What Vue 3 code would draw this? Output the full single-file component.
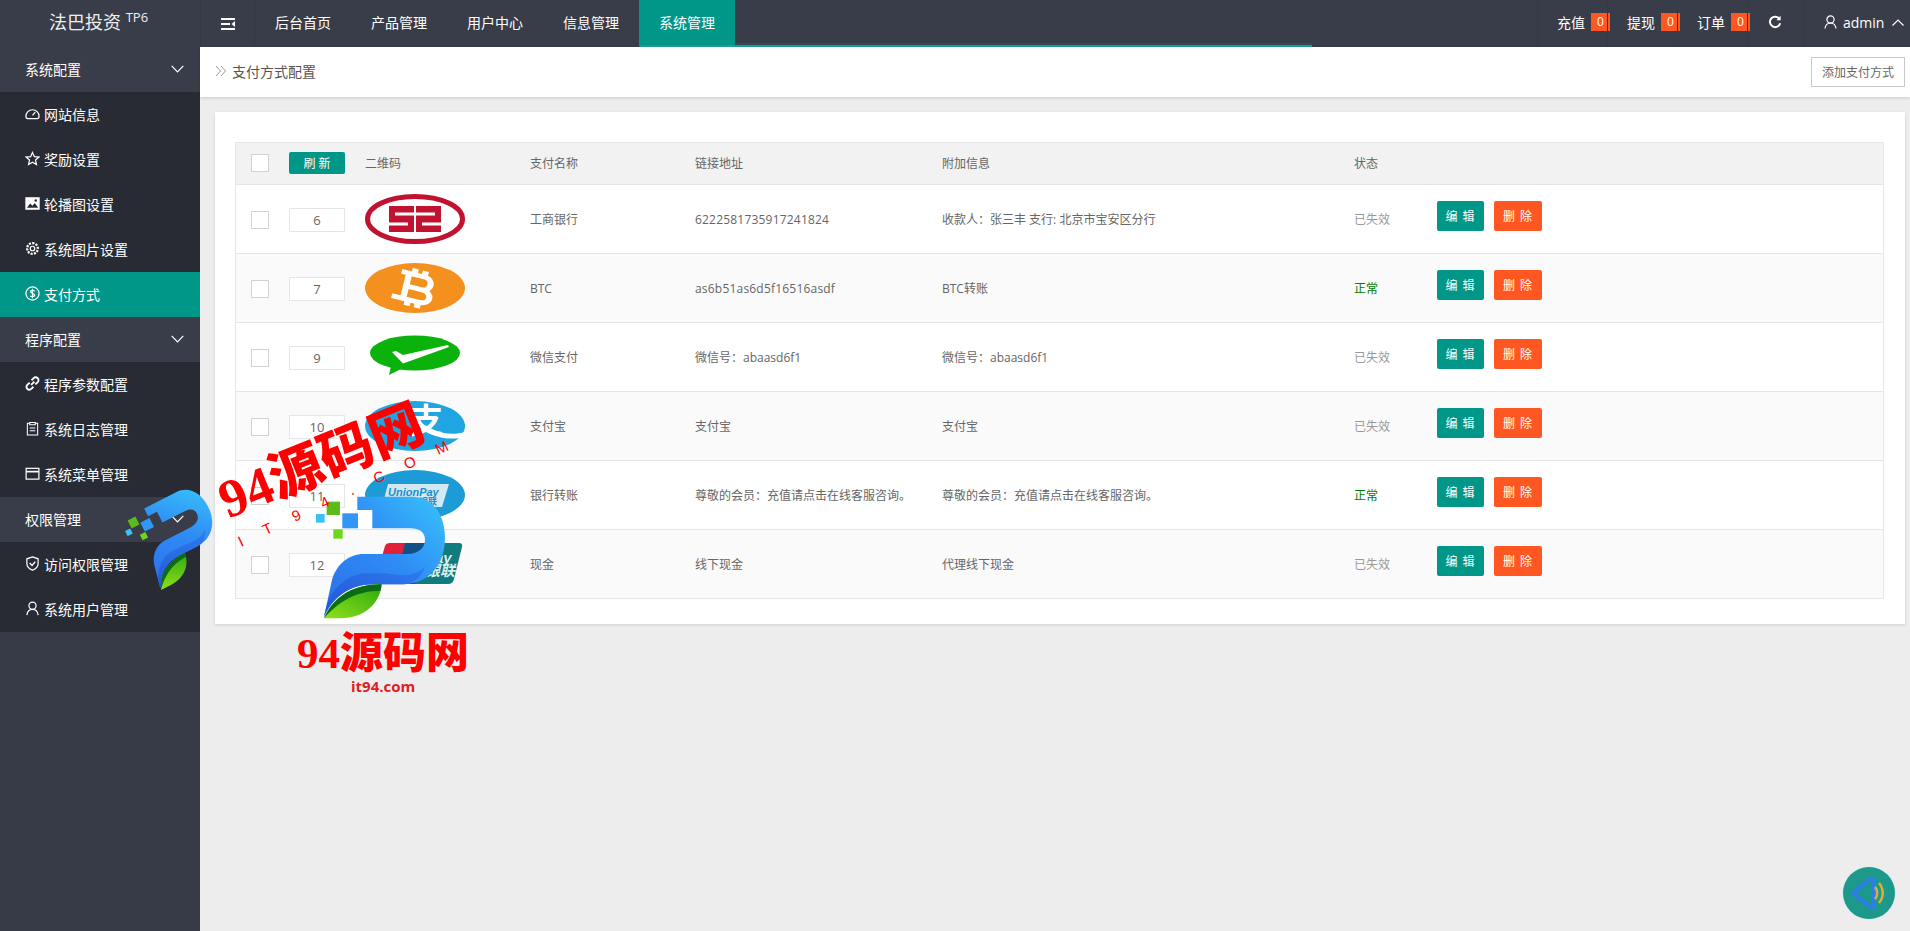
<template>
  <div class="page">
    <header class="top">
      <div class="logo">法巴投资 <sup>TP6</sup></div>
      <div class="toggle">
        <svg width="14" height="12" viewBox="0 0 14 12" fill="#fff">
          <rect x="0" y="0" width="14" height="2" />
          <rect x="0" y="5" width="9" height="2" />
          <rect x="0" y="10" width="14" height="2" />
          <path d="M14 3 L10.5 6 L14 9 Z" />
        </svg>
      </div>
      <nav class="nav">
        <a v-for="n in navs" :key="n" class="nav-item" :class="{ on: n === '系统管理' }">{{ n }}</a>
        <span class="nav-bar"></span>
      </nav>
      <div class="top-right">
        <div v-for="c in counters" :key="c" class="counter">{{ c }}<b>0</b></div>
        <div class="refresh">
          <svg width="14" height="14" viewBox="0 0 14 14" fill="none" stroke="#fff" stroke-width="2">
            <path d="M11.6 4.2 A5.2 5.2 0 1 0 12.2 8.2" />
            <path d="M12.6 0.8 V5.2 H8.4 Z" fill="#fff" stroke="none" />
          </svg>
        </div>
        <div class="user">
          <svg width="13" height="14" viewBox="0 0 13 14" fill="none" stroke="#fff" stroke-width="1.2">
            <circle cx="6.5" cy="4.5" r="3.6" />
            <path d="M1 13.5 C1.5 9.8 3.5 8 6.5 8 C9.5 8 11.5 9.8 12 13.5" />
          </svg>
          <span>admin</span>
          <svg width="12" height="7" viewBox="0 0 12 7" fill="none" stroke="#fff" stroke-width="1.2">
            <path d="M0.5 6.5 L6 1 L11.5 6.5" />
          </svg>
        </div>
      </div>
    </header>

    <div class="body">
      <aside class="side">
        <template v-for="g in menu" :key="g.title">
          <div class="group">
            <span>{{ g.title }}</span>
            <svg width="13" height="8" viewBox="0 0 13 8" fill="none" stroke="#fff" stroke-width="1.2">
              <path d="M0.7 0.8 L6.5 6.8 L12.3 0.8" />
            </svg>
          </div>
          <a v-for="it in g.items" :key="it.name" class="item" :class="{ on: it.name === '支付方式' }">
            <svg class="ico" width="15" height="15" viewBox="0 0 16 16" fill="none" stroke="currentColor" stroke-width="1.3" v-html="icons[it.icon]"></svg>
            {{ it.name }}
          </a>
        </template>
      </aside>

      <main class="main">
        <div class="crumb">
          <div class="crumb-title">
            <svg width="12" height="12" viewBox="0 0 12 12" fill="none" stroke="#999" stroke-width="1">
              <path d="M1 1 L5.5 6 L1 11 M6 1 L10.5 6 L6 11" />
            </svg>
            支付方式配置
          </div>
          <button class="add">添加支付方式</button>
        </div>

        <section class="card">
          <div class="table">
            <div class="row head">
              <div><span class="check"></span></div>
              <div><button class="refresh-btn">刷 新</button></div>
              <div>二维码</div>
              <div>支付名称</div>
              <div>链接地址</div>
              <div>附加信息</div>
              <div>状态</div>
              <div></div>
            </div>
            <div v-for="r in rows" :key="r.id" class="row">
              <div><span class="check"></span></div>
              <div><input class="sort" :value="r.id" /></div>
              <div class="pic">
                <svg width="100" height="50" viewBox="0 0 100 50">
                  <template v-if="r.logo === 'icbc'">
                    <ellipse cx="50" cy="25" rx="47.5" ry="22.5" fill="#fff" stroke="#c1132f" stroke-width="5" />
                    <path fill="#c1132f" d="M24 12 H49 V18.500 H30 V21.500 H49 V38 H24 V31.500 H43 V28.500 H24 Z M51 12 H76 V28.500 H57 V31.500 H76 V38 H51 V21.500 H70 V18.500 H51 Z" />
                  </template>
                  <template v-else-if="r.logo === 'btc'">
                    <ellipse cx="50" cy="25" rx="50" ry="25" fill="#f4901d" />
                    <g transform="rotate(14 50 25) translate(50 25) scale(1.3 1) translate(-50 -25)" fill="none" stroke="#fff" stroke-width="4.800">
                      <path d="M37 12 H55 C63 12 63 25 55 25 H43 M55 25 C65 25 65 38 55 38 H34" />
                      <path d="M43 12 V38 M47 6 V12 M55 6 V12 M47 38 V44 M55 38 V44" />
                    </g>
                  </template>
                  <template v-else-if="r.logo === 'wx'">
                    <ellipse cx="50" cy="21" rx="45" ry="17.500" fill="#0bb20c" />
                    <path d="M26 34 L24 43 L38 36 Z" fill="#0bb20c" />
                    <path fill="#fff" d="M27 20 L31 19 L38 23 L83 13 L84 15 L38 31.500 Z" />
                  </template>
                  <template v-else-if="r.logo === 'ali'">
                    <ellipse cx="50" cy="25" rx="50" ry="25" fill="#1fa6e2" />
                    <text x="44" y="32" class="ali-t">支</text>
                    <path d="M60 24 C72 32 86 35 100 31 L99 36 C84 40 68 36 56 28 Z" fill="#fff" />
                  </template>
                  <template v-else-if="r.logo === 'union'">
                    <ellipse cx="50" cy="25" rx="50" ry="25" fill="#1d9bd7" />
                    <path d="M23 14 H84 L77 37 H17 Z" fill="#d3e8f2" />
                    <text x="23" y="26" class="up-t">UnionPay</text>
                    <text x="54" y="35" class="up-c">银联</text>
                  </template>
                  <template v-else>
                    <path d="M20 7 Q21 4 25 4 H44 L33 45 H14 Q9 45 10 41 Z" fill="#e2203a" />
                    <path d="M40 4 H66 L55 45 H30 Z" fill="#114f86" />
                    <path d="M60 4 H94 Q98 4 97 8 L89 40 Q88 45 83 45 H50 Z" fill="#127b7d" />
                    <text x="60" y="24" class="card-t">Pay</text>
                    <text x="60" y="37" class="card-c">银联</text>
                  </template>
                </svg>
              </div>
              <div>{{ r.name }}</div>
              <div :class="{ latin: /^\w+$/.test(r.link) }">{{ r.link }}</div>
              <div>{{ r.extra }}</div>
              <div :class="r.ok ? 'ok' : 'off'">{{ r.ok ? '正常' : '已失效' }}</div>
              <div class="ops">
                <button class="btn teal">编 辑</button>
                <button class="btn red">删 除</button>
              </div>
            </div>
          </div>
        </section>
      </main>
    </div>

    <svg class="mark" width="520" height="720" viewBox="0 0 520 720">
      <defs>
        <linearGradient id="pBlue" x1="0" y1="1" x2="1" y2="0">
          <stop offset="0" stop-color="#2a6fe8" />
          <stop offset="0.55" stop-color="#2f8df5" />
          <stop offset="1" stop-color="#38c4fb" />
        </linearGradient>
        <linearGradient id="pDark" x1="0" y1="1" x2="1" y2="0">
          <stop offset="0" stop-color="#2454d6" />
          <stop offset="1" stop-color="#2d7cf0" />
        </linearGradient>
        <linearGradient id="pLeaf" x1="0" y1="1" x2="1" y2="0">
          <stop offset="0" stop-color="#8fe01c" />
          <stop offset="1" stop-color="#2ea80f" />
        </linearGradient>
        <g id="pLogo">
          <rect x="620" y="305" width="40" height="40" fill="#5cbb1c" />
          <rect x="588" y="342" width="26" height="26" fill="#3cc0f8" />
          <rect x="667" y="340" width="47" height="45" fill="#3196f5" />
          <rect x="640" y="388" width="28" height="28" fill="#6fd61c" />
          <path fill="url(#pBlue)" d="M712 290 H875 C940 290 975 345 975 415 C975 495 925 553 850 553 H760 C690 553 640 590 612 650 L636 540 C650 490 690 462 730 462 H860 C900 462 915 440 915 420 C915 398 900 385 870 385 H757 V330 H712 Z" />
          <path fill="url(#pDark)" d="M612 650 C640 590 690 553 760 553 H850 C880 553 905 530 915 500 C890 525 860 530 800 520 H740 C690 520 640 560 622 610 Z" />
          <path fill="url(#pLeaf)" d="M612 655 C640 590 700 553 785 553 C780 610 735 655 660 655 Z" />
          <path fill="#0a6c14" d="M612 655 C640 590 700 553 785 553 L782 572 C710 572 655 605 612 655 Z" />
        </g>
      </defs>

      <use href="#pLogo" transform="translate(120 400) scale(0.3333)" />
      <use href="#pLogo" transform="translate(161 590) rotate(-27) scale(0.22) translate(-612 -655)" />

      <text class="wm-big" transform="translate(228 519) rotate(-22)">94源码网</text>
      <text class="wm-sub" transform="translate(241 547) rotate(-25)">IT94.COM</text>
      <text class="wm-low" x="297" y="668">94源码网</text>
      <text class="wm-url" x="351" y="692">it94.com</text>
    </svg>

    <div class="float">
      <svg width="52" height="52" viewBox="0 0 52 52" fill="none">
        <path d="M10 26 L27 12 L30 12 V40 L27 40 Z" stroke="#2c7fe8" stroke-width="4" stroke-linejoin="round" />
        <path d="M32 20 C35 23 35 29 32 32" stroke="#e8ab2f" stroke-width="2.500" />
        <path d="M36 16 C41 22 41 30 36 36" stroke="#e8ab2f" stroke-width="2.500" />
      </svg>
    </div>
  </div>
</template>

<script setup>
const navs = ['后台首页', '产品管理', '用户中心', '信息管理', '系统管理']
const counters = ['充值', '提现', '订单']

const menu = [
  {
    title: '系统配置',
    items: [
      { name: '网站信息', icon: 'gauge' },
      { name: '奖励设置', icon: 'star' },
      { name: '轮播图设置', icon: 'image' },
      { name: '系统图片设置', icon: 'gear' },
      { name: '支付方式', icon: 'dollar' }
    ]
  },
  {
    title: '程序配置',
    items: [
      { name: '程序参数配置', icon: 'link' },
      { name: '系统日志管理', icon: 'clip' },
      { name: '系统菜单管理', icon: 'win' }
    ]
  },
  {
    title: '权限管理',
    items: [
      { name: '访问权限管理', icon: 'shield' },
      { name: '系统用户管理', icon: 'user' }
    ]
  }
]

const icons = {
  gauge: '<path d="M3 13.500 H13 C14.300 13.500 15 12.500 15 11 A7 7 0 0 0 1 11 C1 12.500 1.700 13.500 3 13.500 Z"/><path d="M8 10 L11 6.500"/>',
  star: '<path d="M8 1.500 L10 6 L14.800 6.500 L11.200 9.700 L12.200 14.500 L8 12 L3.800 14.500 L4.800 9.700 L1.200 6.500 L6 6 Z"/>',
  image: '<rect x="1" y="2" width="14" height="12" fill="#fff" stroke="#fff"/><path d="M2 12.500 L5.500 8 L8 10.500 L10.500 7.500 L14 12.500 Z" fill="#282b33" stroke="none"/><circle cx="11.500" cy="4.800" r="1.300" fill="#282b33" stroke="none"/>',
  gear: '<circle cx="8" cy="8" r="2.400"/><path stroke-dasharray="2.200 1.300" stroke-width="2.400" d="M8 2.300 A5.700 5.700 0 1 1 7.990 2.300"/>',
  dollar: '<circle cx="8" cy="8" r="7"/><path d="M10.300 5.500 C9.800 4.400 6 4 6 6.200 C6 8.400 10.300 7.600 10.300 9.900 C10.300 12 6.300 11.600 5.700 10.500 M8 3 V13"/>',
  link: '<path stroke-width="2" d="M6.500 9.500 L10 6 M7 4.500 L9 2.500 C10.500 1 12.200 1 13.500 2.300 C14.800 3.600 14.800 5.300 13.300 6.800 L11 9 M9 11.500 L7 13.500 C5.500 15 3.800 15 2.500 13.700 C1.200 12.400 1.200 10.700 2.700 9.200 L5 7"/>',
  clip: '<path d="M5 2.500 H2.500 V15 H13.500 V2.500 H11 M5 1.500 H11 V4 H5 Z M5 7.500 H11 M5 10.500 H11" stroke-width="1.100"/>',
  win: '<rect x="1.200" y="2.500" width="13.600" height="11.500" /><path d="M1.200 6 H14.800" stroke-width="1.800"/>',
  shield: '<path d="M8 1 L14 3 V8 C14 11.500 11 14 8 15 C5 14 2 11.500 2 8 V3 Z"/><path d="M5 7.500 L7.500 10 L11 6" stroke-width="1.500"/>',
  user: '<circle cx="8" cy="5" r="3.800"/><path d="M2 15 C2.500 11 4.700 9 8 9 C11.300 9 13.500 11 14 15"/>'
}

const rows = [
  { id: 6, logo: 'icbc', name: '工商银行', link: '6222581735917241824', extra: '收款人：张三丰 支行: 北京市宝安区分行', ok: false },
  { id: 7, logo: 'btc', name: 'BTC', link: 'as6b51as6d5f16516asdf', extra: 'BTC转账', ok: true },
  { id: 9, logo: 'wx', name: '微信支付', link: '微信号：abaasd6f1', extra: '微信号：abaasd6f1', ok: false },
  { id: 10, logo: 'ali', name: '支付宝', link: '支付宝', extra: '支付宝', ok: false },
  { id: 11, logo: 'union', name: '银行转账', link: '尊敬的会员：充值请点击在线客服咨询。', extra: '尊敬的会员：充值请点击在线客服咨询。', ok: true },
  { id: 12, logo: 'card', name: '现金', link: '线下现金', extra: '代理线下现金', ok: false }
]
</script>

<style>
body {
  background: #eee;
}
</style>

<style scoped>
.page {
  position: relative;
  height: 100vh;
  overflow: hidden;
  background: #ededed;
  font-family: "Open Sans", "Noto Sans CJK SC", sans-serif;
  font-size: 14px;
  color: #666;
}

.top {
  display: flex;
  height: 47px;
  background: #393d49;
  color: #fff;
}

.logo {
  width: 200px;
  line-height: 44px;
  padding-left: 49px;
  box-sizing: border-box;
  font-size: 18px;
  white-space: nowrap;
  color: #eee;
}

.logo sup {
  font-size: 13px;
  line-height: 0;
  vertical-align: 7px;
}

.toggle {
  width: 55px;
  display: flex;
  align-items: center;
  justify-content: center;
  box-sizing: border-box;
  border-left: 1px solid #343844;
  border-right: 1px solid #343844;
}

.nav {
  position: relative;
  flex: 1;
  display: flex;
}

.nav-item {
  width: 96px;
  text-align: center;
  line-height: 45px;
  color: #fff;
}

.nav-item.on {
  background: #009688;
}

.nav-bar {
  position: absolute;
  left: 385px;
  bottom: 0;
  width: 672px;
  height: 4px;
  background: linear-gradient(to bottom, rgba(0, 150, 136, 0.12) 0, rgba(0, 150, 136, 0.2) 50%, #1f9c8f 50%);
}

.top-right {
  display: flex;
  height: 47px;
}

.counter {
  width: 70px;
  height: 47px;
  padding: 0 0 3px 19px;
  box-sizing: border-box;
  display: flex;
  align-items: center;
  white-space: nowrap;
  border-left: 1px solid #363a46;
}

.counter b {
  display: block;
  width: 19px;
  height: 18px;
  margin-left: 6px;
  background: #ff5722;
  font-size: 12px;
  font-weight: 400;
  line-height: 18px;
  text-align: center;
  flex: none;
}

.refresh {
  width: 56px;
  height: 47px;
  padding: 0 0 3px 20px;
  box-sizing: border-box;
  display: flex;
  align-items: center;
  border-left: 1px solid #363a46;
}

.user {
  width: 107px;
  height: 47px;
  padding: 0 0 3px 20px;
  box-sizing: border-box;
  display: flex;
  align-items: center;
  gap: 6px;
  border-left: 1px solid #363a46;
}

.user span {
  margin-right: 2px;
}

.body {
  display: flex;
  height: calc(100vh - 47px);
}

.side {
  width: 200px;
  flex: none;
  background: #373b47;
  color: #fff;
}

.group {
  height: 45px;
  padding: 0 16px 2px 25px;
  box-sizing: border-box;
  display: flex;
  align-items: center;
  justify-content: space-between;
  background: #393d49;
}

.item {
  height: 45px;
  padding: 0 0 2px 25px;
  box-sizing: border-box;
  display: flex;
  align-items: center;
  gap: 4px;
  background: #282b33;
}

.item.on {
  background: #009688;
}

.ico {
  flex: none;
}

.main {
  flex: 1;
  min-width: 0;
}

.crumb {
  height: 50px;
  padding: 0 5px 0 15px;
  display: flex;
  align-items: center;
  justify-content: space-between;
  background: #fff;
  box-shadow: 0 1px 3px rgba(0, 0, 0, 0.15);
}

.crumb-title {
  display: flex;
  align-items: center;
  gap: 5px;
  padding-bottom: 2px;
  color: #555;
}

.add {
  width: 94px;
  height: 30px;
  padding: 0;
  border: 1px solid #c9c9c9;
  background: #fff;
  color: #666;
  font: inherit;
  font-size: 12px;
}

.card {
  margin: 15px 5px 0 15px;
  padding: 30px 21px 25px 20px;
  background: #fff;
  box-shadow: 0 1px 3px rgba(0, 0, 0, 0.12);
}

.table {
  border: 1px solid #e6e6e6;
  border-bottom-width: 0;
  font-size: 12px;
}

.row {
  display: grid;
  grid-template-columns: 53px 76px 165px 165px 247px 412px 83px 1fr;
  align-items: center;
  height: 69px;
  border-bottom: 1px solid #e6e6e6;
  box-sizing: border-box;
}

.row:nth-child(odd) {
  background: #fafafa;
}

.row.head {
  height: 42px;
  padding-bottom: 2px;
  background: #f2f2f2;
}

.check {
  display: block;
  width: 18px;
  height: 18px;
  margin: 2px 0 0 15px;
  box-sizing: border-box;
  border: 1px solid #d2d2d2;
  background: #fff;
}

.row.head .check {
  margin-top: 0;
}

.refresh-btn {
  display: block;
  width: 56px;
  height: 22px;
  padding: 0;
  border: 0;
  border-radius: 2px;
  background: #009688;
  color: #fff;
  font: inherit;
  font-size: 12px;
}

.sort {
  display: block;
  width: 56px;
  height: 24px;
  margin-top: 2px;
  padding: 0;
  box-sizing: border-box;
  border: 1px solid #e6e6e6;
  color: #666;
  font: inherit;
  font-size: 13px;
  text-align: center;
}

.pic svg {
  display: block;
}

.latin {
  letter-spacing: 0.2px;
}

.ali-t {
  font-size: 34px;
  font-weight: 700;
  fill: #fff;
  font-family: "Noto Sans CJK SC", sans-serif;
}

.up-t {
  font-size: 11px;
  font-weight: 700;
  font-style: italic;
  fill: #1d8fc9;
  font-family: "Liberation Sans", sans-serif;
}

.up-c {
  font-size: 9px;
  font-weight: 700;
  fill: #1d8fc9;
  font-family: "Noto Sans CJK SC", sans-serif;
}

.card-t,
.card-c {
  font-size: 15px;
  font-weight: 700;
  font-style: italic;
  fill: #d9f0ee;
  font-family: "Liberation Sans", "Noto Sans CJK SC", sans-serif;
}

.ok {
  color: #008000;
}

.off {
  color: #999;
}

.ops {
  display: flex;
  gap: 10px;
  margin-bottom: 7px;
}

.btn {
  height: 30px;
  padding: 0;
  border: 0;
  border-radius: 2px;
  color: #fff;
  font: inherit;
  font-size: 12px;
  letter-spacing: 1px;
}

.teal {
  width: 47px;
  background: #009688;
}

.red {
  width: 48px;
  background: #ff5722;
}

.mark {
  position: absolute;
  left: 0;
  top: 0;
  pointer-events: none;
}

.wm-big {
  font-size: 54px;
  font-weight: 900;
  fill: #f00;
  font-family: "Liberation Serif", "Noto Sans CJK SC", serif;
}

.wm-sub {
  font-size: 15px;
  fill: #f00;
  letter-spacing: 23px;
  font-family: "Liberation Sans", sans-serif;
}

.wm-low {
  font-size: 43px;
  font-weight: 900;
  fill: #f00;
  font-family: "Liberation Serif", "Noto Sans CJK SC", serif;
}

.wm-url {
  font-size: 15px;
  font-weight: 700;
  fill: #e02020;
  font-family: "Open Sans", sans-serif;
}

.float {
  position: absolute;
  left: 1843px;
  top: 867px;
  width: 52px;
  height: 52px;
  border-radius: 50%;
  background: #1c998a;
  box-shadow: 0 0 2px #bfeee6;
}
</style>
